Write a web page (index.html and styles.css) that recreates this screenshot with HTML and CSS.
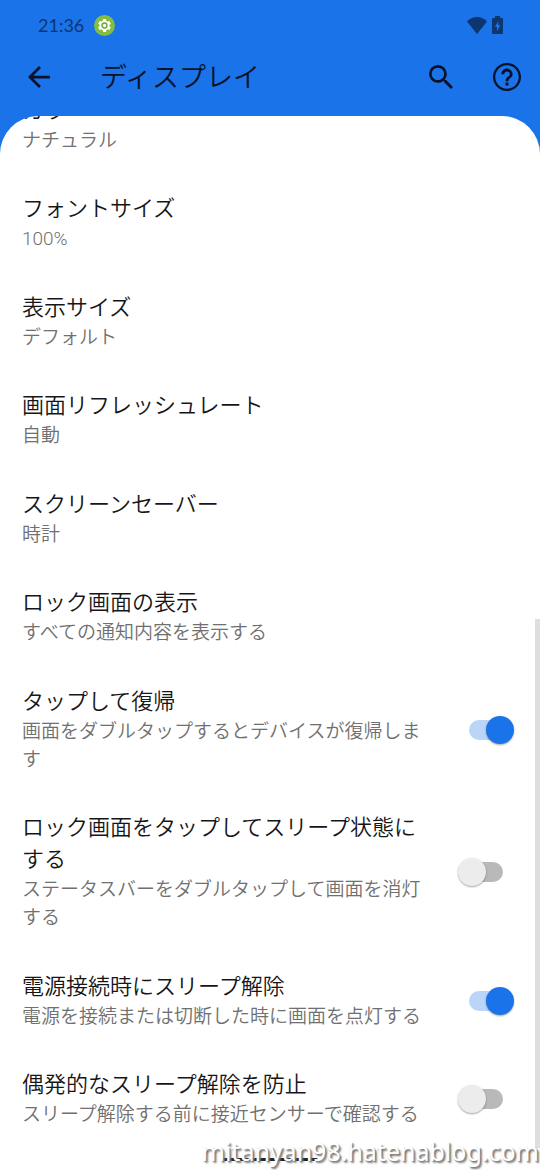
FILE: index.html
```html
<!DOCTYPE html>
<html lang="ja">
<head>
<meta charset="utf-8">
<meta name="viewport" content="width=device-width, initial-scale=1">
<title>ディスプレイ</title>
<link rel="stylesheet" href="styles.css">
</head>
<body>
<div class="screen">
  <div class="status">
    <span class="time">21:36</span>
    <svg class="badge" viewBox="0 0 24 24" aria-hidden="true">
      <circle cx="12" cy="12" r="12" fill="#84bd42"/>
      <g fill="#fff">
        <circle cx="12" cy="12" r="5.6"/>
        <rect x="10" y="4.6" width="4" height="14.8" rx="1"/>
        <rect x="10" y="4.6" width="4" height="14.8" rx="1" transform="rotate(60 12 12)"/>
        <rect x="10" y="4.6" width="4" height="14.8" rx="1" transform="rotate(120 12 12)"/>
      </g>
      <circle cx="12" cy="12" r="2.8" fill="#fff" stroke="#6fa336" stroke-width="1.6"/>
    </svg>
    <svg class="wifi" viewBox="0 0 20 17" aria-hidden="true"><path d="M10 17 0 4.4C2.6 1.700 6 0 10 0s7.400 1.700 10 4.400z" fill="#0d3670"/></svg>
    <svg class="battery" viewBox="0 0 11 18" aria-hidden="true"><path fill-rule="evenodd" fill="#0d3670" d="M3 2V0h5v2h2a1 1 0 0 1 1 1v14a1 1 0 0 1-1 1H1a1 1 0 0 1-1-1V3a1 1 0 0 1 1-1zM6.300 5 3 11h2v4.500L8.200 9H6.300z"/></svg>
  </div>
  <header class="appbar">
    <button class="icon-button" type="button" aria-label="戻る">
      <svg class="back" viewBox="4 4 16 16" aria-hidden="true"><path d="M20 11H7.830l5.590-5.590L12 4l-8 8 8 8 1.410-1.410L7.830 13H20z"/></svg>
    </button>
    <h1 class="heading">ディスプレイ</h1>
    <button class="icon-button" type="button" aria-label="検索">
      <svg class="search" viewBox="3 3 17.500 17.500" aria-hidden="true"><path d="M15.500 14h-.79l-.28-.27A6.470 6.470 0 0 0 16 9.500 6.500 6.500 0 1 0 9.500 16c1.610 0 3.090-.59 4.230-1.570l.27.28v.79l5 4.990L20.490 19zm-6 0C7.010 14 5 11.990 5 9.500S7.010 5 9.500 5 14 7.010 14 9.500 11.990 14 9.500 14z"/></svg>
    </button>
    <button class="icon-button" type="button" aria-label="ヘルプ">
      <svg class="help" viewBox="2 2 20 20" aria-hidden="true"><path d="M11 18h2v-2h-2zm1-16C6.480 2 2 6.480 2 12s4.480 10 10 10 10-4.480 10-10S17.520 2 12 2zm0 18.400c-4.630 0-8.400-3.770-8.400-8.400S7.370 3.600 12 3.600s8.400 3.770 8.400 8.400-3.770 8.400-8.400 8.400zM12 6c-2.210 0-4 1.790-4 4h2c0-1.100.9-2 2-2s2 .9 2 2c0 2-3 1.750-3 5h2c0-2.250 3-2.500 3-5 0-2.210-1.790-4-4-4z"/></svg>
    </button>
  </header>
  <main class="sheet">
    <ul class="settings">
      <li class="row"><div class="copy"><span class="title">カラー</span><span class="summary">ナチュラル</span></div></li>
      <li class="row"><div class="copy"><span class="title">フォントサイズ</span><span class="summary">100%</span></div></li>
      <li class="row"><div class="copy"><span class="title">表示サイズ</span><span class="summary">デフォルト</span></div></li>
      <li class="row"><div class="copy"><span class="title">画面リフレッシュレート</span><span class="summary">自動</span></div></li>
      <li class="row"><div class="copy"><span class="title">スクリーンセーバー</span><span class="summary">時計</span></div></li>
      <li class="row"><div class="copy"><span class="title">ロック画面の表示</span><span class="summary">すべての通知内容を表示する</span></div></li>
      <li class="row"><label class="copy" for="tap-wake"><span class="title">タップして復帰</span><span class="summary">画面をダブルタップするとデバイスが復帰します</span></label><input class="switch" id="tap-wake" type="checkbox" checked></li>
      <li class="row"><label class="copy" for="tap-sleep"><span class="title">ロック画面をタップしてスリープ状態にする</span><span class="summary">ステータスバーをダブルタップして画面を消灯する</span></label><input class="switch" id="tap-sleep" type="checkbox"></li>
      <li class="row"><label class="copy" for="plug-wake"><span class="title">電源接続時にスリープ解除</span><span class="summary">電源を接続または切断した時に画面を点灯する</span></label><input class="switch" id="plug-wake" type="checkbox" checked></li>
      <li class="row"><label class="copy" for="prevent-wake"><span class="title">偶発的なスリープ解除を防止</span><span class="summary">スリープ解除する前に接近センサーで確認する</span></label><input class="switch" id="prevent-wake" type="checkbox"></li>
    </ul>
  </main>
  <div class="scrollbar"></div>
  <div class="home-bar"></div>
  <div class="watermark">mitanyan98.hatenablog.com</div>
</div>
</body>
</html>
```
FILE: styles.css
```css
* { box-sizing: border-box; }

body {
  margin: 0;
  background: #1a73e8;
  color: #161618;
  font-family: Roboto, "Noto Sans CJK JP", sans-serif;
}

.screen {
  position: relative;
  display: flex;
  flex-direction: column;
  min-height: 100vh;
}

.status {
  display: flex;
  align-items: center;
  height: 50px;
  padding: 0 37px 0 38px;
}

.time {
  color: #0d3670;
  font-family: Lato, sans-serif;
  font-size: 18px;
}

.badge { width: 21px; height: 21px; margin-left: 10px; }
.wifi { width: 20px; height: 17px; margin-left: auto; }
.battery { width: 11px; height: 18px; margin-left: 5px; }

.appbar {
  display: flex;
  align-items: center;
  height: 66px;
  padding: 0 9px 12px 15px;
}

.icon-button {
  display: grid;
  place-items: center;
  width: 48px;
  height: 48px;
  padding: 0;
  border: 0;
  background: none;
  fill: #08122a;
}

.icon-button + .icon-button { margin-left: 18px; }
.back { width: 22px; height: 22px; }
.search { width: 24px; height: 24px; }
.help { width: 28px; height: 28px; }

.heading {
  flex: 1;
  margin: 2px 0 0 37px;
  color: #08122a;
  font-size: 27px;
  font-weight: 350;
  line-height: 40px;
}

.sheet {
  display: flex;
  flex: 1;
  overflow: hidden;
  border-radius: 38px 38px 0 0;
  background: #fff;
}

/* Scrolled list: its first row is partly hidden under the app bar. */
.settings {
  display: flex;
  flex: 1;
  flex-direction: column;
  justify-content: space-between;
  gap: 38px;
  margin: -21px 0 0;
  padding: 0 26px 41px 22px;
  list-style: none;
}

.row {
  display: flex;
  align-items: center;
  justify-content: space-between;
}

.copy { max-width: 412px; }
.title, .summary { display: block; font-weight: 350; }
.title { font-size: 22px; line-height: 32px; }
.summary { color: #707070; font-size: 19px; line-height: 28px; }

.switch {
  position: relative;
  flex: none;
  width: 56px;
  height: 28px;
  margin: 0;
  appearance: none;
}

.switch::before {
  content: "";
  position: absolute;
  inset: 4px 11px;
  border-radius: 10px;
  background: #b9b9b9;
}

.switch::after {
  content: "";
  position: absolute;
  top: 0;
  left: 0;
  width: 28px;
  height: 28px;
  border-radius: 50%;
  background: #ececec;
  box-shadow: 0 1px 2px rgba(0, 0, 0, 0.35);
}

.switch:checked::before { background: #bad5f8; }
.switch:checked::after { left: 28px; background: #1a73e8; }

.scrollbar {
  position: absolute;
  right: 0;
  bottom: 22px;
  width: 5px;
  height: 529px;
  background: #dedede;
}

.home-bar {
  position: absolute;
  bottom: 9px;
  left: 50%;
  width: 96px;
  height: 3px;
  margin-left: -48px;
  border-radius: 2px;
  background: #222;
}

.watermark {
  position: absolute;
  right: 1px;
  bottom: 1px;
  color: #fff;
  font-family: "Noto Sans", sans-serif;
  font-size: 25px;
  line-height: 36px;
  text-shadow: 2px 2px 2px #777, 1px 1px 1px #999;
}
```
